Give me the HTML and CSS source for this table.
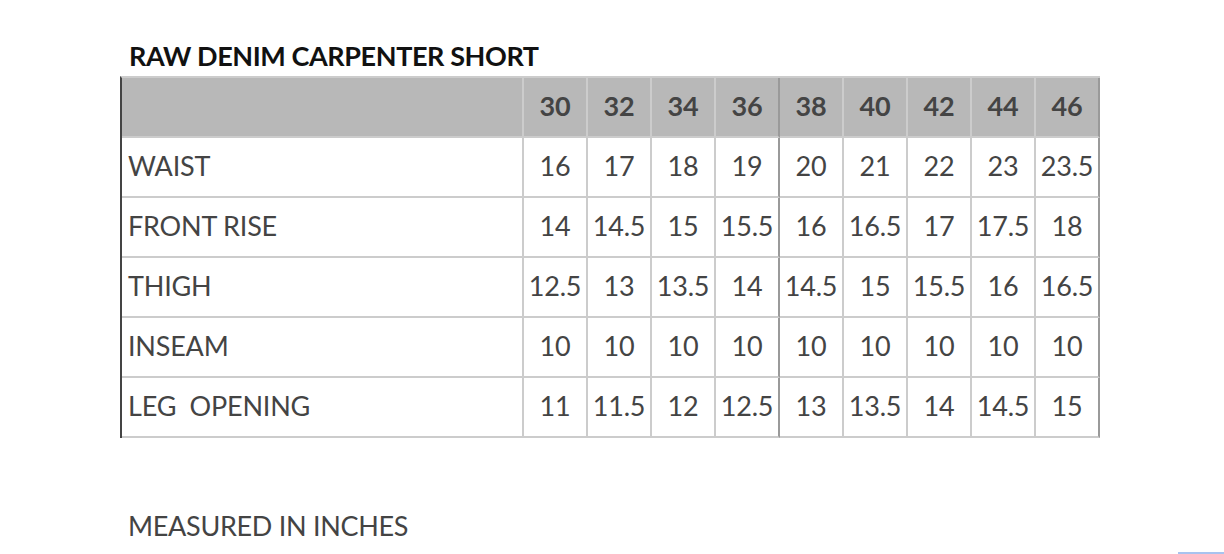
FILE: index.html
```html
<!DOCTYPE html>
<html>
<head>
<meta charset="utf-8">
<link rel="stylesheet" href="styles.css">
</head>
<body>
<div class="page">
  <h2 class="title">RAW DENIM CARPENTER SHORT</h2>
  <div class="chart">
    <div class="cell head label"></div>
    <div class="cell head">30</div>
    <div class="cell head">32</div>
    <div class="cell head">34</div>
    <div class="cell head split">36</div>
    <div class="cell head">38</div>
    <div class="cell head">40</div>
    <div class="cell head">42</div>
    <div class="cell head">44</div>
    <div class="cell head last">46</div>

    <div class="cell label">WAIST</div>
    <div class="cell">16</div><div class="cell">17</div><div class="cell">18</div><div class="cell split">19</div><div class="cell">20</div><div class="cell">21</div><div class="cell">22</div><div class="cell">23</div><div class="cell last">23.5</div>

    <div class="cell label">FRONT RISE</div>
    <div class="cell">14</div><div class="cell">14.5</div><div class="cell">15</div><div class="cell split">15.5</div><div class="cell">16</div><div class="cell">16.5</div><div class="cell">17</div><div class="cell">17.5</div><div class="cell last">18</div>

    <div class="cell label">THIGH</div>
    <div class="cell">12.5</div><div class="cell">13</div><div class="cell">13.5</div><div class="cell split">14</div><div class="cell">14.5</div><div class="cell">15</div><div class="cell">15.5</div><div class="cell">16</div><div class="cell last">16.5</div>

    <div class="cell label">INSEAM</div>
    <div class="cell">10</div><div class="cell">10</div><div class="cell">10</div><div class="cell split">10</div><div class="cell">10</div><div class="cell">10</div><div class="cell">10</div><div class="cell">10</div><div class="cell last">10</div>

    <div class="cell label">LEG&nbsp; OPENING</div>
    <div class="cell">11</div><div class="cell">11.5</div><div class="cell">12</div><div class="cell split">12.5</div><div class="cell">13</div><div class="cell">13.5</div><div class="cell">14</div><div class="cell">14.5</div><div class="cell last">15</div>
  </div>
  <p class="note">MEASURED IN INCHES</p>
  <div class="bar"></div>
</div>
</body>
</html>
```
FILE: styles.css
```css
html, body {
  margin: 0;
  padding: 0;
  background: #fff;
}
body {
  font-family: Lato, "Open Sans", sans-serif;
  color: #444;
  width: 1224px;
  height: 554px;
  overflow: hidden;
}
.page {
  padding: 38px 0 0 120px;
  display: flex;
  flex-direction: column;
}
.title {
  margin: 0 0 3px 9px;
  font-size: 27px;
  line-height: 35px;
  font-weight: 700;
  color: #111;
  letter-spacing: -0.4px;
}
.chart {
  display: grid;
  grid-template-columns: 402px repeat(9, 64px);
  grid-auto-rows: 60px;
  width: max-content;
  border-left: 2px solid #444;
  border-top: 2px solid #ccc;
}
.cell {
  box-sizing: border-box;
  border-right: 2px solid #ccc;
  border-bottom: 2px solid #ccc;
  padding-bottom: 3px;
  font-size: 27px;
  display: flex;
  align-items: center;
  justify-content: center;
  white-space: nowrap;
  letter-spacing: -0.2px;
}
.cell.label {
  justify-content: flex-start;
  padding-left: 6px;
}
.cell.head {
  background: #b8b8b8;
  font-weight: 700;
  color: #444;
}
.cell.split {
  border-right-color: #9a9a9a;
}
.cell.last {
  border-right-color: #9a9a9a;
}
.note {
  margin: 71px 0 0 8px;
  font-size: 27px;
  line-height: 34px;
  color: #444;
  letter-spacing: -0.3px;
}
.bar {
  align-self: flex-end;
  width: 46px;
  height: 2px;
  margin-top: 9px;
  background: #a9c3ef;
}
```
